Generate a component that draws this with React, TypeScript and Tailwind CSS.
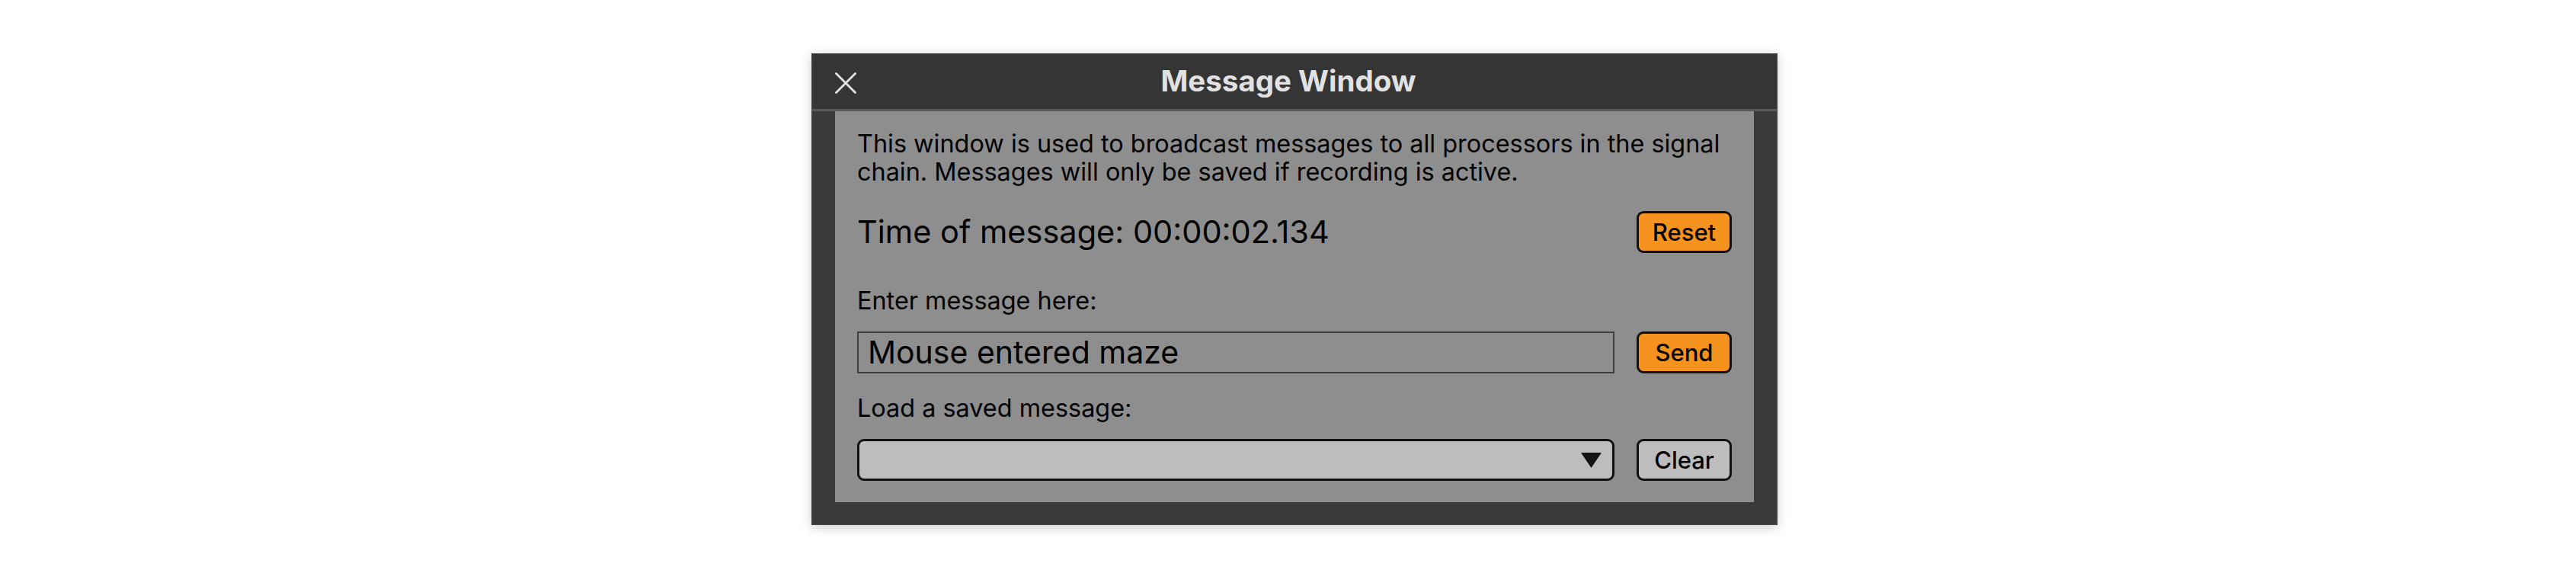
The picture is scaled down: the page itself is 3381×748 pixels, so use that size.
function OrangeButton({ label }: { label: string }) {
  return (
    <button className="flex h-[55px] w-[125px] shrink-0 items-center justify-center rounded-[9px] border-[3px] border-[#111111] bg-[#f6921e] text-[31px] font-medium leading-none text-black">
      {label}
    </button>
  );
}

export default function App() {
  return (
    <div className="min-h-[748px] w-full bg-white pl-[1065px] pt-[70px] font-['Inter','Liberation_Sans',sans-serif]">
      <div className="flex w-[1268px] flex-col border border-[#474747] bg-[#3a3a3a] shadow-[0_3px_14px_rgba(0,0,0,0.2)]">
        {/* Title bar */}
        <div className="relative flex h-[72px] items-center justify-center bg-[#353535] pr-[16px]">
          <svg className="absolute left-[30px] top-[24px]" width="28" height="28" viewBox="0 0 28 28">
            <path d="M1.5 1.5 L26.5 26.5 M26.5 1.5 L1.5 26.5" stroke="#e4e4e4" strokeWidth="2.8" strokeLinecap="round" />
          </svg>
          <h1 className="text-[38.5px] font-bold text-[#e2e2e2]">Message Window</h1>
        </div>
        <div className="h-[3px] bg-[#5a5a5a]" />

        {/* Body */}
        <div className="px-[30px] pb-[29px]">
          <div className="flex flex-col bg-[#8e8e8e] px-[29px] pb-[28px] pt-[24px] text-black">
            <p className="text-[32.4px] leading-[37px]">
              This window is used to broadcast messages to all processors in the signal chain. Messages will only be
              saved if recording is active.
            </p>

            <div className="mt-[29px] flex items-center justify-between">
              <span className="text-[41.5px]">Time of message: 00:00:02.134</span>
              <OrangeButton label="Reset" />
            </div>

            <p className="mt-[41px] text-[32.4px] leading-[37px]">Enter message here:</p>

            <div className="mt-[22px] flex items-center gap-[29px]">
              <div className="flex h-[55px] flex-1 items-center border-[2px] border-[#3e3e3e] pl-[12px] text-[41px]">
                Mouse entered maze
              </div>
              <OrangeButton label="Send" />
            </div>

            <p className="mt-[27px] text-[32.4px] leading-[37px]">Load a saved message:</p>

            <div className="mt-[22px] flex items-center gap-[29px]">
              <div className="flex h-[55px] flex-1 items-center justify-end rounded-[9px] border-[3px] border-[#111111] bg-[#bdbdbd] pr-[14px]">
                <svg width="27" height="20" viewBox="0 0 27 20">
                  <path d="M0 0 L27 0 L13.5 20 Z" fill="#141414" />
                </svg>
              </div>
              <button className="flex h-[55px] w-[125px] shrink-0 items-center justify-center rounded-[9px] border-[3px] border-[#111111] bg-[#bdbdbd] text-[31px] font-medium leading-none text-black">
                Clear
              </button>
            </div>
          </div>
        </div>
      </div>
    </div>
  );
}
